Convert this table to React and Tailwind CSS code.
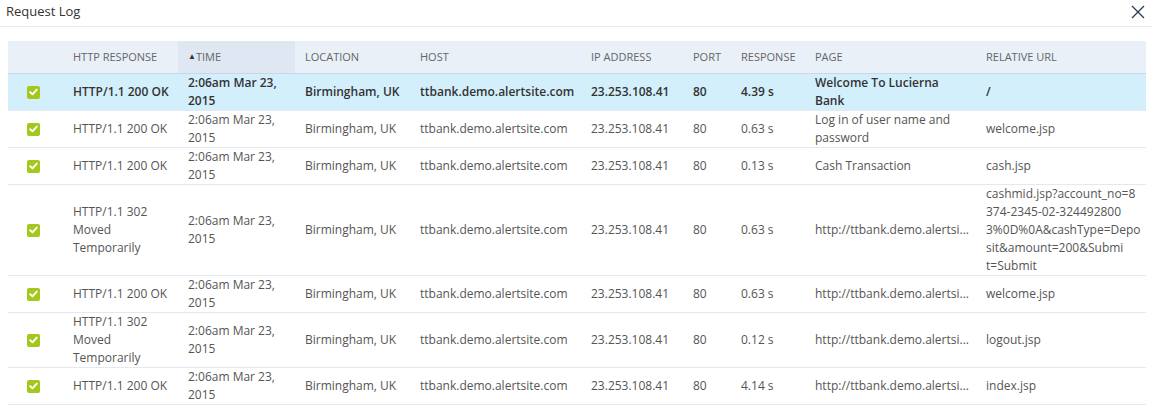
import React from 'react';

const longUrl = ['cashmid.jsp?account_no=8', '374-2345-02-324492800', '3%0D%0A&cashType=Depo', 'sit&amount=200&Submi', 't=Submit'];

const rows = [
  { code: 'HTTP/1.1 200 OK', resp: '4.39 s', page: 'Welcome To Lucierna Bank', url: '/', selected: true },
  { code: 'HTTP/1.1 200 OK', resp: '0.63 s', page: 'Log in of user name and password', url: 'welcome.jsp' },
  { code: 'HTTP/1.1 200 OK', resp: '0.13 s', page: 'Cash Transaction', url: 'cash.jsp' },
  { code: 'HTTP/1.1 302 Moved Temporarily', resp: '0.63 s', page: 'http://ttbank.demo.alertsi...', url: longUrl },
  { code: 'HTTP/1.1 200 OK', resp: '0.63 s', page: 'http://ttbank.demo.alertsi...', url: 'welcome.jsp' },
  { code: 'HTTP/1.1 302 Moved Temporarily', resp: '0.12 s', page: 'http://ttbank.demo.alertsi...', url: 'logout.jsp' },
  { code: 'HTTP/1.1 200 OK', resp: '4.14 s', page: 'http://ttbank.demo.alertsi...', url: 'index.jsp' },
];

const headers = ['', 'HTTP RESPONSE', 'TIME', 'LOCATION', 'HOST', 'IP ADDRESS', 'PORT', 'RESPONSE', 'PAGE', 'RELATIVE URL'];
const widths = ['w-[55px]', 'w-[115px]', 'w-[117px]', 'w-[115px]', 'w-[171px]', 'w-[102px]', 'w-[48px]', 'w-[74px]', 'w-[171px]', 'w-[170px]'];

const Check = () => (
  <span className="inline-flex w-[13px] h-[13px] rounded-[2px] bg-[#a2c81c] items-center justify-center align-middle">
    <svg width="9" height="8" viewBox="0 0 9 8">
      <path d="M1.2 4.2 L3.5 6.3 L7.8 1.6" stroke="#fff" strokeWidth="1.9" fill="none" strokeLinecap="round" strokeLinejoin="round" />
    </svg>
  </span>
);

const cell = 'pl-[10px] pr-[8px] py-0 align-middle text-left';

export default function App() {
  return (
    <div className="w-[1152px] h-[412px] bg-white overflow-hidden text-[#555] font-['Open_Sans',sans-serif]">
      <div className="flex items-center justify-between h-[27px] border-b border-[#e6ebf1] pl-[6px] pr-[7px]">
        <span className="text-[13px] text-[#333] leading-none -mt-[4px]">Request Log</span>
        <svg width="14" height="14" viewBox="0 0 14 14" className="-mt-[2px]">
          <path d="M1 1 L13 13 M13 1 L1 13" stroke="#2c3a4d" strokeWidth="1.3" />
        </svg>
      </div>
      <div className="px-[8px] pt-[14px]">
        <table className="table-fixed border-collapse w-[1138px] text-[12px] leading-[18px]">
          <colgroup>
            {widths.map((w, i) => <col key={i} className={w} />)}
          </colgroup>
          <thead>
            <tr className="h-[32px] bg-[#eaf0f8] border-b border-[#c8d8ea]">
              {headers.map((h, i) => (
                <th key={i} className={`${cell} font-normal text-[11px] text-[#666] ${i === 2 ? 'bg-[#dfe7f3] pl-[4px]' : ''}`}>
                  {i === 2 && <span className="text-[8px] align-[2px] text-[#333]">▲</span>}
                  {h}
                </th>
              ))}
            </tr>
          </thead>
          <tbody>
            {rows.map((r, i) => (
              <tr key={i} className={`border-b border-[#e3e9f3] ${r.selected ? 'bg-[#d4effc] text-[#333] font-semibold' : ''}`}>
                <td className="text-center align-middle py-0 pr-[4px]"><Check /></td>
                <td className={cell}>{r.code}</td>
                <td className={cell}>2:06am Mar 23, 2015</td>
                <td className={cell}>Birmingham, UK</td>
                <td className={cell}>ttbank.demo.alertsite.com</td>
                <td className={cell}>23.253.108.41</td>
                <td className={cell}>80</td>
                <td className={cell}>{r.resp}</td>
                <td className={cell}>{r.page}</td>
                <td className={`${cell} whitespace-nowrap`}>
                  {Array.isArray(r.url)
                    ? r.url.map((part, j) => <div key={j}>{part}</div>)
                    : r.url}
                </td>
              </tr>
            ))}
          </tbody>
        </table>
      </div>
    </div>
  );
}
